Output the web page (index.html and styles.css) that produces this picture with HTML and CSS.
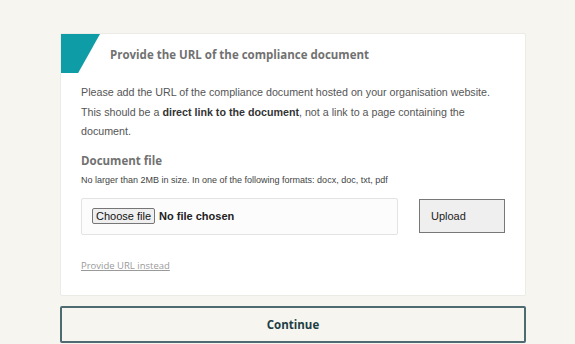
FILE: index.html
```html
<!DOCTYPE html>
<html lang="en">

<head>
    <meta charset="UTF-8">
    <meta name="viewport" content="width=device-width, initial-scale=1.0">
    <title>Compliance document</title>
    <link rel="stylesheet" href="styles.css">
</head>

<body>
    <div class="page">
        <div class="card">
            <div class="card-header">
                <span class="corner"></span>
                <h2>Provide the URL of the compliance document</h2>
            </div>

            <div class="card-body">
                <p class="intro">
                    Please add the URL of the compliance document hosted on your organisation website.
                    This should be a <strong>direct link to the document</strong>, not a link to a page containing the
                    document.
                </p>

                <h3>Document file</h3>
                <p class="hint">No larger than 2MB in size. In one of the following formats: docx, doc, txt, pdf</p>

                <div class="upload-row">
                    <div class="file-box">
                        <button class="choose">Choose file</button>
                        <span class="file-name">No file chosen</span>
                    </div>
                    <button class="upload">Upload</button>
                </div>

                <a href="#" class="switch-link">Provide URL instead</a>
            </div>
        </div>

        <button class="continue">Continue</button>
    </div>
</body>

</html>
```

FILE: styles.css
```css
:root {
    --teal: #0e9ca6;
    --text: #555;
    --heading: #717171;
    --dark: #1f3d44;
    --bg: #f6f5f0;
}

body {
    margin: 0;
    padding: 0;
    background-color: var(--bg);
    font-family: 'Liberation Sans', Arial, sans-serif;
    color: var(--text);
}

.page {
    width: 466px;
    margin: 33px 0 0 60px;
}

.card {
    background-color: white;
    border: 1px solid #ecebe6;
    border-radius: 2px;
}

.card-header {
    position: relative;
    height: 40px;
    display: flex;
    align-items: center;
    padding-left: 49px;
}

.corner {
    position: absolute;
    left: 0;
    top: 0;
    width: 39px;
    height: 39px;
    background-color: var(--teal);
    clip-path: polygon(0 0, 100% 0, 44% 100%, 0 100%);
}

h2 {
    margin: 0;
    font-family: 'Open Sans', sans-serif;
    font-weight: 700;
    font-size: 11.5px;
    color: var(--heading);
}

.card-body {
    padding: 9px 20px 22px 20px;
}

.intro {
    margin: 0;
    font-size: 10.7px;
    line-height: 19.5px;
}

.intro strong {
    color: #333;
}

h3 {
    margin: 11px 0 0 0;
    font-family: 'Open Sans', sans-serif;
    font-weight: 700;
    font-size: 11.5px;
    color: var(--heading);
}

.hint {
    margin: 7px 0 0 0;
    font-size: 9px;
    color: #444;
}

.upload-row {
    display: flex;
    align-items: center;
    gap: 21px;
    margin-top: 13px;
}

.file-box {
    width: 317px;
    height: 37px;
    box-sizing: border-box;
    border: 1px solid #e3e3e3;
    border-radius: 2px;
    background-color: #fcfcfc;
    display: flex;
    align-items: center;
    padding-left: 10px;
}

.choose {
    font-family: 'Liberation Sans', Arial, sans-serif;
    font-size: 11px;
    color: #111;
    background-color: #efefef;
    border: 1px solid #767676;
    border-radius: 2px;
    padding: 1px 3px;
}

.file-name {
    margin-left: 4px;
    font-size: 11px;
    font-weight: 700;
    color: #222;
}

.upload {
    width: 86px;
    height: 34px;
    box-sizing: border-box;
    background-color: #efefef;
    border: 1px solid #777;
    text-align: left;
    padding-left: 11px;
    font-family: 'Liberation Sans', Arial, sans-serif;
    font-size: 11px;
    color: #222;
}

.switch-link {
    display: inline-block;
    margin-top: 24px;
    font-family: 'Open Sans', sans-serif;
    font-size: 9.5px;
    color: #9a9a9a;
}

.continue {
    display: block;
    width: 100%;
    height: 37px;
    margin-top: 10px;
    background-color: transparent;
    border: 2px solid #4d6b70;
    border-radius: 2px;
    font-family: 'Open Sans', sans-serif;
    font-weight: 700;
    font-size: 11.5px;
    color: var(--dark);
}
```
